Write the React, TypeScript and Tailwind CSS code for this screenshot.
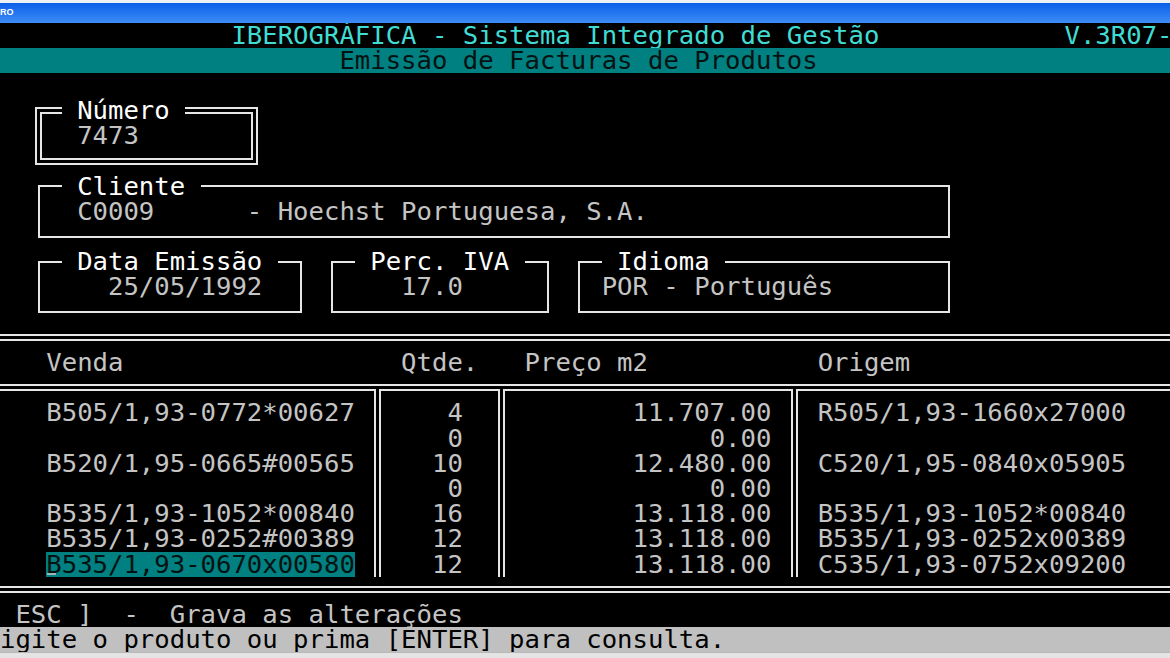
const LINE = "border-[#e6e6e6]";

function Sep() {
  return <div className={"w-[7px] shrink-0 border-x-2 " + LINE} />;
}

function DoubleRule() {
  return (
    <div className="h-[25.2px] flex items-center shrink-0">
      <div className={"w-full h-[7px] border-y-2 " + LINE} />
    </div>
  );
}

const rows = [
  { v: "B505/1,93-0772*00627", q: "4", p: "11.707.00", o: "R505/1,93-1660x27000" },
  { v: "", q: "0", p: "0.00", o: "" },
  { v: "B520/1,95-0665#00565", q: "10", p: "12.480.00", o: "C520/1,95-0840x05905" },
  { v: "", q: "0", p: "0.00", o: "" },
  { v: "B535/1,93-1052*00840", q: "16", p: "13.118.00", o: "B535/1,93-1052*00840" },
  { v: "B535/1,93-0252#00389", q: "12", p: "13.118.00", o: "B535/1,93-0252x00389" },
  { v: "B535/1,93-0670x00580", q: "12", p: "13.118.00", o: "C535/1,93-0752x09200", sel: true },
];

export default function App() {
  return (
    <div className="w-[1170px] h-[658px] overflow-hidden bg-black flex flex-col">
      {/* window chrome */}
      <div className="h-[22.5px] shrink-0 flex flex-col">
        <div className="h-[3px] bg-[#eef0f4]" />
        <div className="flex-1 bg-linear-to-b from-[#0b5ee8] via-[#2476f0] to-[#3d8cf6] flex items-center">
          <span className="font-['Liberation_Sans',sans-serif] text-[9px] font-bold text-white leading-none">RO</span>
        </div>
      </div>

      <div className="font-['DejaVu_Sans_Mono',monospace] text-[25.63px] leading-[25.2px] whitespace-pre text-[#c4c4c4] flex flex-col overflow-hidden">
        {/* row 0 */}
        <div className="h-[25.2px] shrink-0 text-[#40dcd4]">
          {"               IBEROGRÁFICA - Sistema Integrado de Gestão            V.3R07-"}
        </div>
        {/* row 1 */}
        <div className="h-[25.2px] shrink-0 bg-[#008080] text-[#061212]">
          {"                      Emissão de Facturas de Produtos"}
        </div>
        {/* row 2 */}
        <div className="h-[25.2px] shrink-0" />

        {/* rows 3-5 Número */}
        <div className="h-[75.6px] shrink-0 pt-[9.1px]">
          <div className={"ml-[calc(2.5ch_-_3.5px)] w-[calc(14ch_+_7px)] h-[57.4px] border-2 p-[3px] " + LINE}>
            <div className={"h-full border-2 " + LINE}>
              <div className="mt-[-16.1px] ml-[calc(1.5ch_-_3.5px)] w-fit bg-black text-white">{" Número "}</div>
              <div className="ml-[calc(2.5ch_-_3.5px)]">7473</div>
            </div>
          </div>
        </div>

        {/* rows 6-8 Cliente */}
        <div className="h-[75.6px] shrink-0 pt-[11.6px]">
          <div className={"ml-[calc(2.5ch_-_1px)] w-[calc(59ch_+_2px)] h-[52.4px] border-2 " + LINE}>
            <div className="mt-[-13.6px] ml-[calc(1.5ch_-_1px)] w-fit bg-black text-white">{" Cliente "}</div>
            <div className="ml-[calc(2.5ch_-_1px)]">{"C0009      - Hoechst Portuguesa, S.A."}</div>
          </div>
        </div>

        {/* rows 9-11 */}
        <div className="h-[75.6px] shrink-0 pt-[11.6px] flex">
          <div className={"shrink-0 ml-[calc(2.5ch_-_1px)] w-[calc(17ch_+_2px)] h-[52.4px] border-2 " + LINE}>
            <div className="mt-[-13.6px] ml-[calc(1.5ch_-_1px)] w-fit bg-black text-white">{" Data Emissão "}</div>
            <div className="ml-[calc(4.5ch_-_1px)]">25/05/1992</div>
          </div>
          <div className={"shrink-0 ml-[calc(2ch_-_2px)] w-[calc(14ch_+_2px)] h-[52.4px] border-2 " + LINE}>
            <div className="mt-[-13.6px] ml-[calc(1.5ch_-_1px)] w-fit bg-black text-white">{" Perc. IVA "}</div>
            <div className="ml-[calc(4.5ch_-_1px)]">17.0</div>
          </div>
          <div className={"shrink-0 ml-[calc(2ch_-_2px)] w-[calc(24ch_+_2px)] h-[52.4px] border-2 " + LINE}>
            <div className="mt-[-13.6px] ml-[calc(1.5ch_-_1px)] w-fit bg-black text-white">{" Idioma "}</div>
            <div className="ml-[calc(1.5ch_-_1px)]">POR - Português</div>
          </div>
        </div>

        {/* row 12 */}
        <DoubleRule />

        {/* row 13 header */}
        <div className="h-[25.2px] shrink-0">
          {"   Venda                  Qtde.   Preço m2           Origem"}
        </div>

        {/* rows 14-21 table */}
        <div className="h-[201.6px] shrink-0 flex flex-col pt-[9.1px]">
          <div className="h-[2px] shrink-0 bg-[#e6e6e6]" />
          <div className="h-[3px] shrink-0" />
          <div className="flex flex-1">
            <div className={"w-[calc(24.5ch_-_3.5px)] shrink-0 border-t-2 pt-[9.1px] " + LINE}>
              {rows.map((r, i) => (
                <div key={i} className="h-[25.2px] pl-[3ch]">
                  {r.sel ? (
                    <span className="relative inline-block h-[25.2px] bg-[#008080] text-[#061212]">
                      {r.v}
                      <span className="absolute left-[1px] bottom-[2px] w-[9px] h-[2px] bg-[#9ab8b8]" />
                    </span>
                  ) : (
                    r.v
                  )}
                </div>
              ))}
            </div>
            <Sep />
            <div className={"w-[calc(8ch_-_7px)] shrink-0 border-t-2 pt-[9.1px] text-right pr-[calc(2.5ch_-_3.5px)] " + LINE}>
              {rows.map((r, i) => (
                <div key={i} className="h-[25.2px]">{r.q}</div>
              ))}
            </div>
            <Sep />
            <div className={"w-[calc(19ch_-_7px)] shrink-0 border-t-2 pt-[9.1px] text-right pr-[calc(1.5ch_-_3.5px)] " + LINE}>
              {rows.map((r, i) => (
                <div key={i} className="h-[25.2px]">{r.p}</div>
              ))}
            </div>
            <Sep />
            <div className={"flex-1 border-t-2 pt-[9.1px] pl-[calc(1.5ch_-_3.5px)] " + LINE}>
              {rows.map((r, i) => (
                <div key={i} className="h-[25.2px]">{r.o}</div>
              ))}
            </div>
          </div>
        </div>

        {/* row 22 */}
        <DoubleRule />

        {/* row 23 */}
        <div className="h-[25.2px] shrink-0">{" ESC ]  -  Grava as alterações"}</div>

        {/* row 24 status */}
        <div className="h-[25.2px] shrink-0 bg-[#c0c0c0] text-[#000000]">
          {"igite o produto ou prima [ENTER] para consulta."}
        </div>
      </div>

      <div className="h-[5.5px] shrink-0 bg-[#e4e4e4] border-t border-[#b8b8b8]" />
    </div>
  );
}
